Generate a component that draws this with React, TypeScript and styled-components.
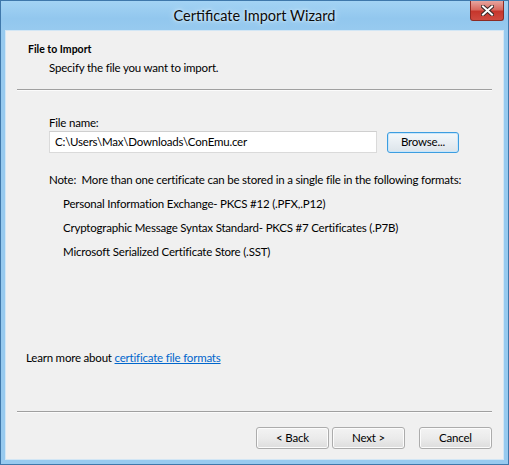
import React from "react";
import styled, { createGlobalStyle } from "styled-components";

const Global = createGlobalStyle`
  html, body { margin: 0; padding: 0; background: #ffffff; }
  body { font-family: "Segoe UI", Lato, sans-serif; }
`;

const Window = styled.div`
  width: 509px;
  height: 465px;
  box-sizing: border-box;
  border: 1px solid #3f78ab;
  background: #97caef;
  display: flex;
  flex-direction: column;
  padding: 0 4px 4px 4px;
`;

const TitleBar = styled.div`
  height: 29px;
  display: grid;
  grid-template-columns: 1fr auto 1fr;
  align-items: start;
  margin: 0 -4px;
  padding: 0 4px;
  background: linear-gradient(#a3d3f4, #92c7ee 60%, #97caef);
`;

const Title = styled.div`
  grid-column: 2;
  font-family: "Segoe UI", Lato, sans-serif;
  font-size: 14.5px;
  line-height: 29px;
  color: #0b0b0b;
  text-shadow: 0 0 6px #dff0fc, 0 0 3px #e8f5fd;
`;

const CloseButton = styled.div`
  grid-column: 3;
  justify-self: end;
  width: 34px;
  height: 20px;
  box-sizing: border-box;
  border: 1px solid #8c2a24;
  border-top: none;
  border-radius: 0 0 3px 3px;
  background: linear-gradient(#e6a59f, #d96a60 45%, #c6362c 55%, #cf4a40);
  display: flex;
  align-items: center;
  justify-content: center;
`;

const Client = styled.div`
  flex: 1;
  box-sizing: border-box;
  background: #f0f0f0;
  border: 1px solid #d2e6f5;
  display: flex;
  flex-direction: column;
  font-family: "Segoe UI", Lato, sans-serif;
  font-size: 11.5px;
  letter-spacing: -0.2px;
  line-height: 16px;
  color: #000;
`;

const Header = styled.div`
  padding: 10px 0 0 22px;
  display: flex;
  flex-direction: column;
  gap: 3px;
`;

const HeaderTitle = styled.div`
  font-weight: 700;
  font-size: 10.5px;
  letter-spacing: 0;
`;

const HeaderSub = styled.div`
  padding-left: 21px;
`;

const Separator = styled.div<{ $top: number }>`
  margin: ${(p) => p.$top}px 11px 0 11px;
  height: 0;
  border-top: 1px solid #a0a0a0;
  border-bottom: 1px solid #fbfbfb;
`;

const Body = styled.div`
  flex: 1;
  padding: 24px 0 0 43px;
  display: flex;
  flex-direction: column;
`;

const FieldRow = styled.div`
  display: flex;
  align-items: center;
  gap: 10px;
`;

const TextBox = styled.div`
  width: 328px;
  height: 22px;
  box-sizing: border-box;
  background: #fff;
  border: 1px solid #dadada;
  border-top-color: #cfcfcf;
  padding: 0 5px;
  display: flex;
  align-items: center;
`;

const Button = styled.div<{ $default?: boolean; $w?: number }>`
  width: ${(p) => p.$w ?? 73}px;
  height: ${(p) => (p.$default ? 21 : 22)}px;
  box-sizing: border-box;
  border: 1px solid ${(p) => (p.$default ? "#3c9de0" : "#acacac")};
  border-radius: 3px;
  background: ${(p) =>
    p.$default
      ? "linear-gradient(#f4f8fb, #e8eef3 50%, #dce4ea)"
      : "linear-gradient(#f3f3f3, #ebebeb 50%, #dddddd)"};
  box-shadow: ${(p) => (p.$default ? "inset 0 0 0 1px #c9e6fa" : "inset 0 0 0 1px #fcfcfc")};
  display: flex;
  align-items: center;
  justify-content: center;
  color: #000;
`;

const Note = styled.div`
  margin-top: 19px;
  display: flex;
  flex-direction: column;
  gap: 8px;
`;

const Format = styled.div`
  padding-left: 14px;
`;

const LearnMore = styled.div`
  padding-left: 20px;
`;

const Link = styled.a`
  color: #0066cc;
  text-decoration: underline;
`;

const Footer = styled.div`
  padding: 14px 11px 10px 0;
  display: flex;
  justify-content: flex-end;
  gap: 3px;
`;

const Spacer = styled.div`
  width: 8px;
`;

export default function App() {
  return (
    <>
      <Global />
      <Window>
        <TitleBar>
          <Title>Certificate Import Wizard</Title>
          <CloseButton>
            <svg width="13" height="11" viewBox="0 0 13 11">
              <path
                d="M2 1.5 L6.5 5.5 L11 1.5 M2 9.5 L6.5 5.5 L11 9.5"
                stroke="#3a2a2a"
                strokeWidth="4"
                fill="none"
                strokeLinecap="square"
              />
              <path
                d="M2 1.5 L6.5 5.5 L11 1.5 M2 9.5 L6.5 5.5 L11 9.5"
                stroke="#ffffff"
                strokeWidth="2"
                fill="none"
                strokeLinecap="square"
              />
            </svg>
          </CloseButton>
        </TitleBar>
        <Client>
          <Header>
            <HeaderTitle>File to Import</HeaderTitle>
            <HeaderSub>Specify the file you want to import.</HeaderSub>
          </Header>
          <Separator $top={13} />
          <Body>
            <div>File name:</div>
            <FieldRow>
              <TextBox>C:\Users\Max\Downloads\ConEmu.cer</TextBox>
              <Button $default $w={72}>Browse...</Button>
            </FieldRow>
            <Note>
              <div>Note:&nbsp; More than one certificate can be stored in a single file in the following formats:</div>
              <Format>Personal Information Exchange- PKCS #12 (.PFX,.P12)</Format>
              <Format>Cryptographic Message Syntax Standard- PKCS #7 Certificates (.P7B)</Format>
              <Format>Microsoft Serialized Certificate Store (.SST)</Format>
            </Note>
          </Body>
          <LearnMore>
            Learn more about <Link>certificate file formats</Link>
          </LearnMore>
          <Separator $top={45} />
          <Footer>
            <Button>&lt; Back</Button>
            <Button>Next &gt;</Button>
            <Spacer />
            <Button>Cancel</Button>
          </Footer>
        </Client>
      </Window>
    </>
  );
}
